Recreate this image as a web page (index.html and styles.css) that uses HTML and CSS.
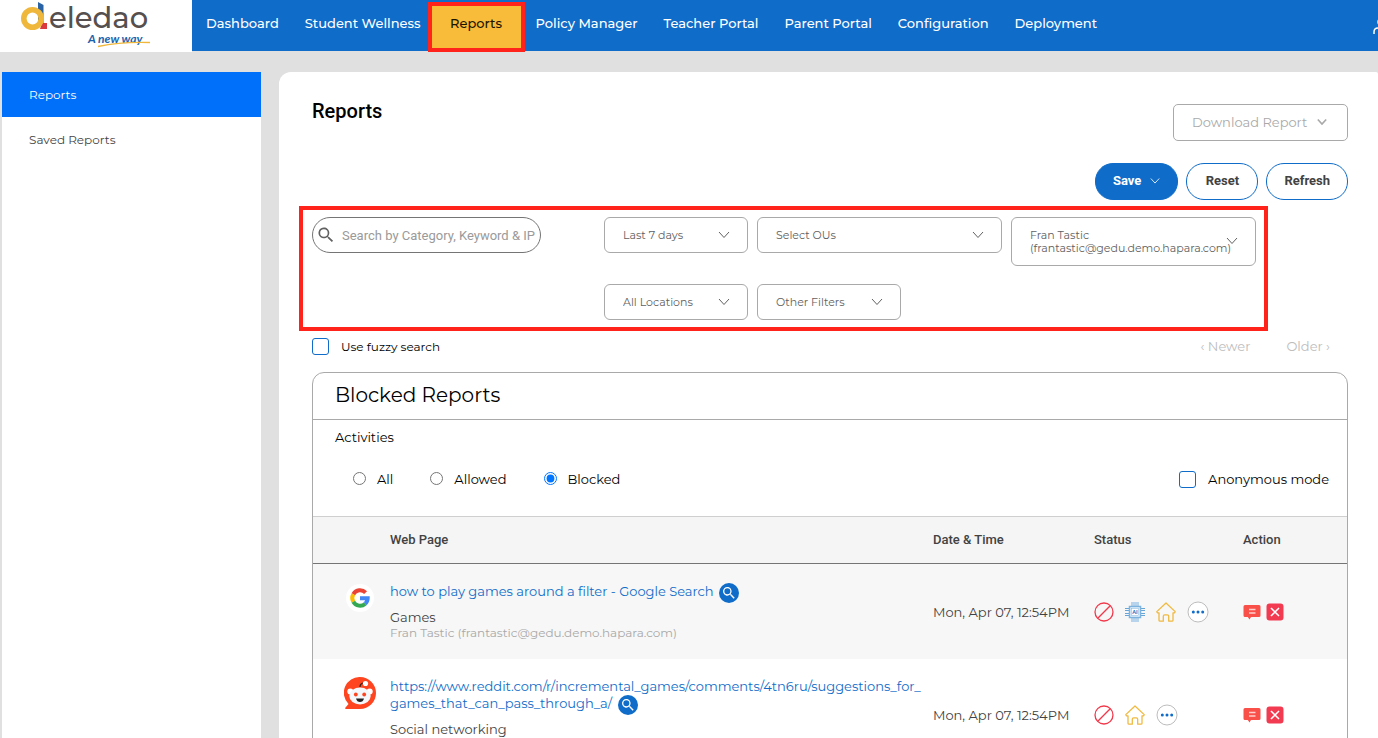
FILE: index.html
```html
<!doctype html>
<html lang="en">
  <head>
    <meta charset="UTF-8" />
    <meta name="viewport" content="width=device-width, initial-scale=1.0" />
    <title>Reports - Deledao</title>
    <link rel="stylesheet" href="styles.css">
  </head>
  <body>
    <!-- Shared icons -->
    <svg class="sprite" aria-hidden="true">
      <symbol id="i-search" viewBox="0 0 24 24">
        <path fill="currentColor" d="M15.5 14h-.8l-.3-.3A6.5 6.5 0 1 0 13.700 14.400l.3.3v.8l5 5 1.500-1.500zM9.500 14a4.500 4.500 0 1 1 0-9 4.500 4.500 0 0 1 0 9z" />
      </symbol>
      <symbol id="i-down" viewBox="0 0 12 12">
        <path fill="none" stroke="currentColor" d="M1 3l5 5.500 5-5.500" />
      </symbol>
      <symbol id="i-block" viewBox="0 0 20 20">
        <circle cx="10" cy="10" r="9" fill="none" stroke="#f2394b" stroke-width="1.300" />
        <path stroke="#f2394b" stroke-width="1.300" d="M3.800 16.200L16.200 3.800" />
      </symbol>
      <symbol id="i-home" viewBox="0 0 20 20">
        <path fill="none" stroke="#f0b940" stroke-width="1.300" stroke-linejoin="round" d="M10 1L.8 9.600l.6 1.200H3v7.400q0 1 1 1h3.300v-5q0-1.400 1.400-1.400h2.600q1.400 0 1.400 1.400v5H16q1 0 1-1v-7.400h1.600l.6-1.200z" />
      </symbol>
      <symbol id="i-more" viewBox="0 0 22 22">
        <circle cx="11" cy="11" r="10" fill="#fff" stroke="#bdbdbd" />
        <g fill="#0f6cc9"><circle cx="6.300" cy="11" r="1.500" /><circle cx="11" cy="11" r="1.500" /><circle cx="15.700" cy="11" r="1.500" /></g>
      </symbol>
      <symbol id="i-chat" viewBox="0 0 18 18">
        <path fill="#f9504a" d="M2 2h14q1.500 0 1.500 1.500v9Q17.500 14 16 14H8l-1.500 2.500L4.800 14H2Q.5 14 .5 12.500v-9Q.5 2 2 2z" />
        <path stroke="#ffd0cd" stroke-width="1.300" d="M6 6.500h6.500M6 10h6.500" />
      </symbol>
      <symbol id="i-close" viewBox="0 0 18 18">
        <rect x=".5" y=".5" width="17" height="17" rx="3" fill="#f23b50" />
        <path stroke="#fff" stroke-width="1.600" d="M5 5l8 8M13 5l-8 8" />
      </symbol>
    </svg>

    <header class="topbar">
      <a class="logo" href="#" aria-label="Deledao">
        <svg width="134" height="50" viewBox="0 0 134 50">
          <path fill="#2a63a5" d="M19 2l5.500 3v19L19 20z" />
          <path fill="#d93a3f" d="M23 23h5v6h-7z" />
          <circle cx="13.500" cy="18.500" r="8.700" fill="none" stroke="#efb83c" stroke-width="5.600" />
          <text class="logo-name" x="30" y="28">eledao</text>
          <text class="logo-tag" x="69" y="43">A new way</text>
          <path fill="none" stroke="#efb83c" stroke-width="1.300" d="M79 46.500q24-5 52-4" />
        </svg>
      </a>
      <nav class="nav">
        <a href="#">Dashboard</a>
        <a href="#">Student Wellness</a>
        <a class="active" href="#">Reports</a>
        <a href="#">Policy Manager</a>
        <a href="#">Teacher Portal</a>
        <a href="#">Parent Portal</a>
        <a href="#">Configuration</a>
        <a href="#">Deployment</a>
      </nav>
      <button class="user" aria-label="Account">
        <svg width="20" height="20" viewBox="0 0 20 20" fill="none" stroke="#fff" stroke-width="1.500">
          <circle cx="10" cy="6" r="4" />
          <path d="M2 18v-2q0-4 4-4h7q4 0 4 4v2" />
        </svg>
      </button>
    </header>

    <div class="layout">
      <aside class="sidebar">
        <a class="active" href="#">Reports</a>
        <a href="#">Saved Reports</a>
      </aside>

      <main class="panel">
        <div class="panel-head">
          <h1>Reports</h1>
          <button class="download">Download Report
            <svg width="10" height="10" stroke-width="2"><use href="#i-down" /></svg>
          </button>
        </div>

        <div class="buttons">
          <button class="pill primary">Save
            <svg width="10" height="10"><use href="#i-down" /></svg>
          </button>
          <button class="pill">Reset</button>
          <button class="pill">Refresh</button>
        </div>

        <section class="filters">
          <label class="search">
            <svg width="20" height="20"><use href="#i-search" /></svg>
            <input type="text" aria-label="Search" placeholder="Search by Category, Keyword &amp; IP" />
          </label>
          <div class="filter-list">
            <div class="filter">
              <select aria-label="Period"><option>Last 7 days</option></select>
              <svg width="12" height="12"><use href="#i-down" /></svg>
            </div>
            <div class="filter wide">
              <select aria-label="OUs"><option>Select OUs</option></select>
              <svg width="12" height="12"><use href="#i-down" /></svg>
            </div>
            <button class="filter wide person">
              <span>Fran Tastic<br />(frantastic@gedu.demo.hapara.com)</span>
              <svg width="12" height="12"><use href="#i-down" /></svg>
            </button>
            <div class="filter">
              <select aria-label="Location"><option>All Locations</option></select>
              <svg width="12" height="12"><use href="#i-down" /></svg>
            </div>
            <div class="filter">
              <select aria-label="Other filters"><option>Other Filters</option></select>
              <svg width="12" height="12"><use href="#i-down" /></svg>
            </div>
          </div>
        </section>

        <div class="options">
          <label class="check small"><input type="checkbox" />Use fuzzy search</label>
          <div class="pager">
            <button disabled>‹ Newer</button>
            <button disabled>Older ›</button>
          </div>
        </div>

        <section class="card">
          <h2>Blocked Reports</h2>
          <p class="activities">Activities</p>
          <div class="modes">
            <label class="radio"><input type="radio" name="mode" />All</label>
            <label class="radio"><input type="radio" name="mode" />Allowed</label>
            <label class="radio"><input type="radio" name="mode" checked />Blocked</label>
            <label class="check"><input type="checkbox" />Anonymous mode</label>
          </div>

          <table class="reports">
            <thead>
              <tr>
                <th class="col-icon"></th>
                <th>Web Page</th>
                <th class="col-date">Date &amp; Time</th>
                <th class="col-status">Status</th>
                <th class="col-action">Action</th>
              </tr>
            </thead>
            <tbody>
              <tr>
                <td class="site">
                  <svg width="32" height="32" viewBox="0 0 32 32">
                    <circle cx="16" cy="16" r="14" fill="#fff" />
                    <g fill="none" stroke-width="4">
                      <path stroke="#ea4335" d="M9.300 12.200A7.700 7.700 0 0 1 21.600 10.700" />
                      <path stroke="#fbbc05" d="M9.300 19.800a7.700 7.700 0 0 1 0-7.600" />
                      <path stroke="#34a853" d="M21.200 21.700A7.700 7.700 0 0 1 9.300 19.800" />
                      <path stroke="#4285f4" d="M16 16.300h7.700q0 3.300-2.500 5.400" />
                    </g>
                  </svg>
                </td>
                <td class="page">
                  <div class="page-link">
                    <a href="#">how to play games around a filter - Google Search</a>
                    <button class="lookup" aria-label="Look up"><svg width="16" height="16"><use href="#i-search" /></svg></button>
                  </div>
                  <p>Games</p>
                  <p class="who">Fran Tastic (frantastic@gedu.demo.hapara.com)</p>
                </td>
                <td>Mon, Apr 07, 12:54PM</td>
                <td>
                  <div class="status">
                    <svg width="20" height="20"><use href="#i-block" /></svg>
                    <svg width="20" height="20" viewBox="0 0 20 20">
                      <path fill="none" stroke="#a3c9e8" stroke-width="1.500" d="M7 0v4M9 0v4M11 0v4M13 0v4M7 16v4M9 16v4M11 16v4M13 16v4" />
                      <path fill="none" stroke="#67a5d9" d="M0 6.500h4M0 8.500h4M0 11.500h4M0 13.500h4M16 6.500h4M16 8.500h4M16 11.500h4M16 13.500h4" />
                      <rect x="4.500" y="4.500" width="11" height="11" fill="#e9f3fb" stroke="#7db3df" stroke-width="1.500" />
                      <rect x="6.500" y="6.500" width="7" height="7" fill="#fff" stroke="#7db3df" stroke-width=".5" />
                      <text class="chip-text" x="10" y="12" text-anchor="middle">AI</text>
                    </svg>
                    <svg width="20" height="20"><use href="#i-home" /></svg>
                    <button aria-label="More"><svg width="22" height="22"><use href="#i-more" /></svg></button>
                  </div>
                </td>
                <td>
                  <div class="actions">
                    <button aria-label="Comment"><svg width="18" height="18"><use href="#i-chat" /></svg></button>
                    <button aria-label="Block"><svg width="18" height="18"><use href="#i-close" /></svg></button>
                  </div>
                </td>
              </tr>
              <tr>
                <td class="site">
                  <svg width="32" height="32" viewBox="0 0 32 32">
                    <path fill="#ff4520" d="M16 0a15.800 15.800 0 1 1 0 32H2q-1.500-.3-.5-1.500l3-3.500A15.800 15.800 0 0 1 16 0z" />
                    <circle cx="6.300" cy="14.500" r="3" fill="#fff" />
                    <circle cx="25.700" cy="14.500" r="3" fill="#fff" />
                    <ellipse cx="16" cy="19" rx="10.700" ry="8.500" fill="#f4f8fb" />
                    <path fill="none" stroke="#222" stroke-width="1.200" d="M16 10q0-4 4-4" />
                    <circle cx="21.500" cy="6.500" r="2.600" fill="#fff" />
                    <circle cx="11.800" cy="17.500" r="1.900" fill="#ff4520" />
                    <circle cx="20.200" cy="17.500" r="1.900" fill="#ff4520" />
                    <path fill="#222" d="M12 21.500h8q-1 3.500-4 3.500t-4-3.500z" />
                  </svg>
                </td>
                <td class="page">
                  <div class="page-link">
                    <a href="#">https://www.reddit.com/r/incremental_games/comments/4tn6ru/suggestions_for_<wbr />games_that_can_pass_through_a/</a>
                    <button class="lookup" aria-label="Look up"><svg width="16" height="16"><use href="#i-search" /></svg></button>
                  </div>
                  <p>Social networking</p>
                  <p class="who">Fran Tastic (frantastic@gedu.demo.hapara.com)</p>
                </td>
                <td>Mon, Apr 07, 12:54PM</td>
                <td>
                  <div class="status">
                    <svg width="20" height="20"><use href="#i-block" /></svg>
                    <svg width="20" height="20"><use href="#i-home" /></svg>
                    <button aria-label="More"><svg width="22" height="22"><use href="#i-more" /></svg></button>
                  </div>
                </td>
                <td>
                  <div class="actions">
                    <button aria-label="Comment"><svg width="18" height="18"><use href="#i-chat" /></svg></button>
                    <button aria-label="Block"><svg width="18" height="18"><use href="#i-close" /></svg></button>
                  </div>
                </td>
              </tr>
            </tbody>
          </table>
        </section>
      </main>
    </div>
  </body>
</html>
```

FILE: styles.css
```css
* {
  margin: 0;
  padding: 0;
  box-sizing: border-box;
}

body {
  font-family: Montserrat, Inter, sans-serif;
  font-size: 13px;
  background: #e0e0e0;
  color: #000;
  height: 100vh;
  display: flex;
  flex-direction: column;
  overflow: hidden;
}

a {
  color: inherit;
  text-decoration: none;
}

button,
input,
select {
  font: inherit;
  color: inherit;
  background: none;
  border: none;
}

button {
  cursor: pointer;
}

svg {
  display: block;
  flex-shrink: 0;
}

.sprite {
  position: absolute;
  width: 0;
  height: 0;
}

/* Top bar */
.topbar {
  display: flex;
  align-items: flex-start;
  height: 52px;
  flex-shrink: 0;
  overflow: hidden;
}

.logo {
  width: 192px;
  height: 52px;
  padding-left: 19px;
  background: #fff;
  flex-shrink: 0;
}

.logo-name {
  font-size: 29px;
  font-weight: 500;
  fill: #55504f;
}

.logo-tag {
  font-family: Lato, sans-serif;
  font-size: 12px;
  font-weight: 700;
  font-style: italic;
  fill: #1c62ab;
}

.nav {
  display: flex;
  flex: 1;
  height: 51px;
  padding-left: 1px;
  background: #0f6cc9;
  color: #fff;
  font-weight: 500;
}

.nav a {
  padding: 0 13px;
  line-height: 47px;
  white-space: nowrap;
}

.nav .active {
  width: 97px;
  height: 50px;
  margin: 2px -2px 0 -6px;
  padding: 0;
  background: #f8bc3a;
  border: 4px solid #ff231c;
  color: #1b1400;
  line-height: 35px;
  text-align: center;
}

.user {
  height: 51px;
  width: 6px;
  background: #0f6cc9;
}

/* Layout */
.layout {
  display: flex;
  flex: 1;
  min-height: 0;
  padding: 20px 0 0 2px;
  gap: 18px;
}

.sidebar {
  width: 259px;
  flex-shrink: 0;
  background: #fff;
  color: #444;
  font-size: 12px;
}

.sidebar a {
  display: block;
  padding-left: 27px;
  line-height: 45px;
}

.sidebar .active {
  background: #0070fb;
  color: #fff;
}

.panel {
  flex: 1;
  min-width: 0;
  padding: 32px 30px 0 33px;
  background: #fff;
  border-radius: 12px 2px 0 0;
  overflow: hidden;
}

.panel-head {
  display: flex;
  justify-content: space-between;
  height: 37px;
}

.panel-head h1 {
  font-family: Roboto, sans-serif;
  font-size: 20px;
  font-weight: 500;
  line-height: 14px;
}

.download {
  display: flex;
  align-items: center;
  justify-content: space-between;
  width: 175px;
  padding: 0 20px 1px 18px;
  border: 1px solid #a9a9a9;
  border-radius: 5px;
  color: #a9a9a9;
}

.buttons {
  display: flex;
  justify-content: flex-end;
  gap: 8px;
  margin-top: 22px;
}

.pill {
  display: flex;
  align-items: center;
  justify-content: center;
  gap: 9px;
  min-width: 72px;
  height: 37px;
  padding: 0 17px 2px;
  border: 1px solid #0f6cc9;
  border-radius: 18px;
  font-family: Roboto, sans-serif;
  font-weight: 700;
  color: #424242;
}

.pill.primary {
  background: #0f6cc9;
  color: #fff;
}

/* Filters */
.filters {
  display: flex;
  justify-content: space-between;
  align-items: flex-start;
  height: 125px;
  margin: 6px 80px 0 -13px;
  padding: 7px 8px 0 9px;
  border: 4px solid #ff231c;
}

.search {
  display: flex;
  align-items: center;
  width: 229px;
  height: 36px;
  padding-left: 3px;
  gap: 6px;
  border: 1px solid #757575;
  border-radius: 18px;
  color: #616161;
}

.search input {
  flex: 1;
  min-width: 0;
  font-family: Roboto, sans-serif;
  outline: none;
}

.search input::placeholder {
  color: #9a9a9a;
}

.filter-list {
  display: flex;
  flex-wrap: wrap;
  align-items: flex-start;
  width: 652px;
  gap: 18px 9px;
  color: #616161;
  font-size: 11px;
}

.filter {
  position: relative;
  width: 144px;
  height: 36px;
  border: 1px solid #a9a9a9;
  border-radius: 6px;
}

.filter.wide {
  width: 245px;
}

.filter select {
  appearance: none;
  width: 100%;
  height: 100%;
  padding-left: 18px;
}

.filter svg {
  position: absolute;
  right: 17px;
  top: 11px;
  pointer-events: none;
}

.filter.person {
  height: 49px;
  padding-left: 18px;
  line-height: 13px;
  text-align: left;
  color: #616161;
  font-size: 11px;
}

.filter.person svg {
  top: 17px;
}

.options {
  display: flex;
  justify-content: space-between;
  align-items: center;
  height: 30px;
}

.check {
  display: flex;
  align-items: center;
  gap: 12px;
}

.check.small {
  font-size: 12px;
}

.check input {
  appearance: none;
  width: 17px;
  height: 17px;
  border: 1px solid #0f6cc9;
  border-radius: 3px;
}

.pager {
  display: flex;
  gap: 36px;
  padding-right: 18px;
}

.pager button {
  color: #bdbdbd;
}

/* Report card */
.card {
  margin-top: 11px;
  border: 1px solid #a9a9a9;
  border-radius: 12px;
}

.card h2 {
  padding: 0 22px 2px;
  font-size: 20px;
  font-weight: 400;
  line-height: 44px;
  border-bottom: 1px solid #a9a9a9;
}

.activities {
  padding: 9px 22px 0;
  line-height: 16px;
}

.modes {
  display: flex;
  align-items: center;
  gap: 37px;
  height: 71px;
  padding: 0 18px 3px 40px;
}

.radio {
  display: flex;
  align-items: center;
  gap: 11px;
}

.radio input {
  width: 13px;
  height: 13px;
  margin-bottom: 2px;
}

.modes .check {
  margin-left: auto;
}

.reports {
  width: 100%;
  table-layout: fixed;
  border-collapse: collapse;
  color: #424242;
}

.reports th {
  height: 47px;
  padding-bottom: 2px;
  background: #f5f5f5;
  border-top: 1px solid #cfcfcf;
  border-bottom: 1px solid #757575;
  font-family: Roboto, sans-serif;
  font-weight: 500;
  text-align: left;
}

.col-icon {
  width: 77px;
}

.col-date {
  width: 161px;
}

.col-status {
  width: 149px;
}

.col-action {
  width: 104px;
}

.reports tbody tr:nth-child(odd) {
  background: #f7f7f7;
}

.site {
  padding: 18px 0 0 31px;
  vertical-align: top;
}

.page {
  padding: 19px 8px 19px 0;
}

.page-link {
  margin-bottom: 8px;
  line-height: 17px;
  color: #0f6cc9;
}

.lookup {
  display: inline-flex;
  align-items: center;
  justify-content: center;
  width: 20px;
  height: 20px;
  margin: 0 0 -1px 2px;
  border-radius: 50%;
  background: #0f6cc9;
  color: #fff;
  vertical-align: middle;
}

.page p {
  line-height: 15px;
}

.page .who {
  font-size: 12px;
  color: #a9a9a9;
}

.status {
  display: flex;
  align-items: center;
  gap: 11px;
}

.chip-text {
  font-size: 5px;
  font-weight: 700;
  fill: #1f78c8;
}

.actions {
  display: flex;
  align-items: center;
  gap: 5px;
}
```
